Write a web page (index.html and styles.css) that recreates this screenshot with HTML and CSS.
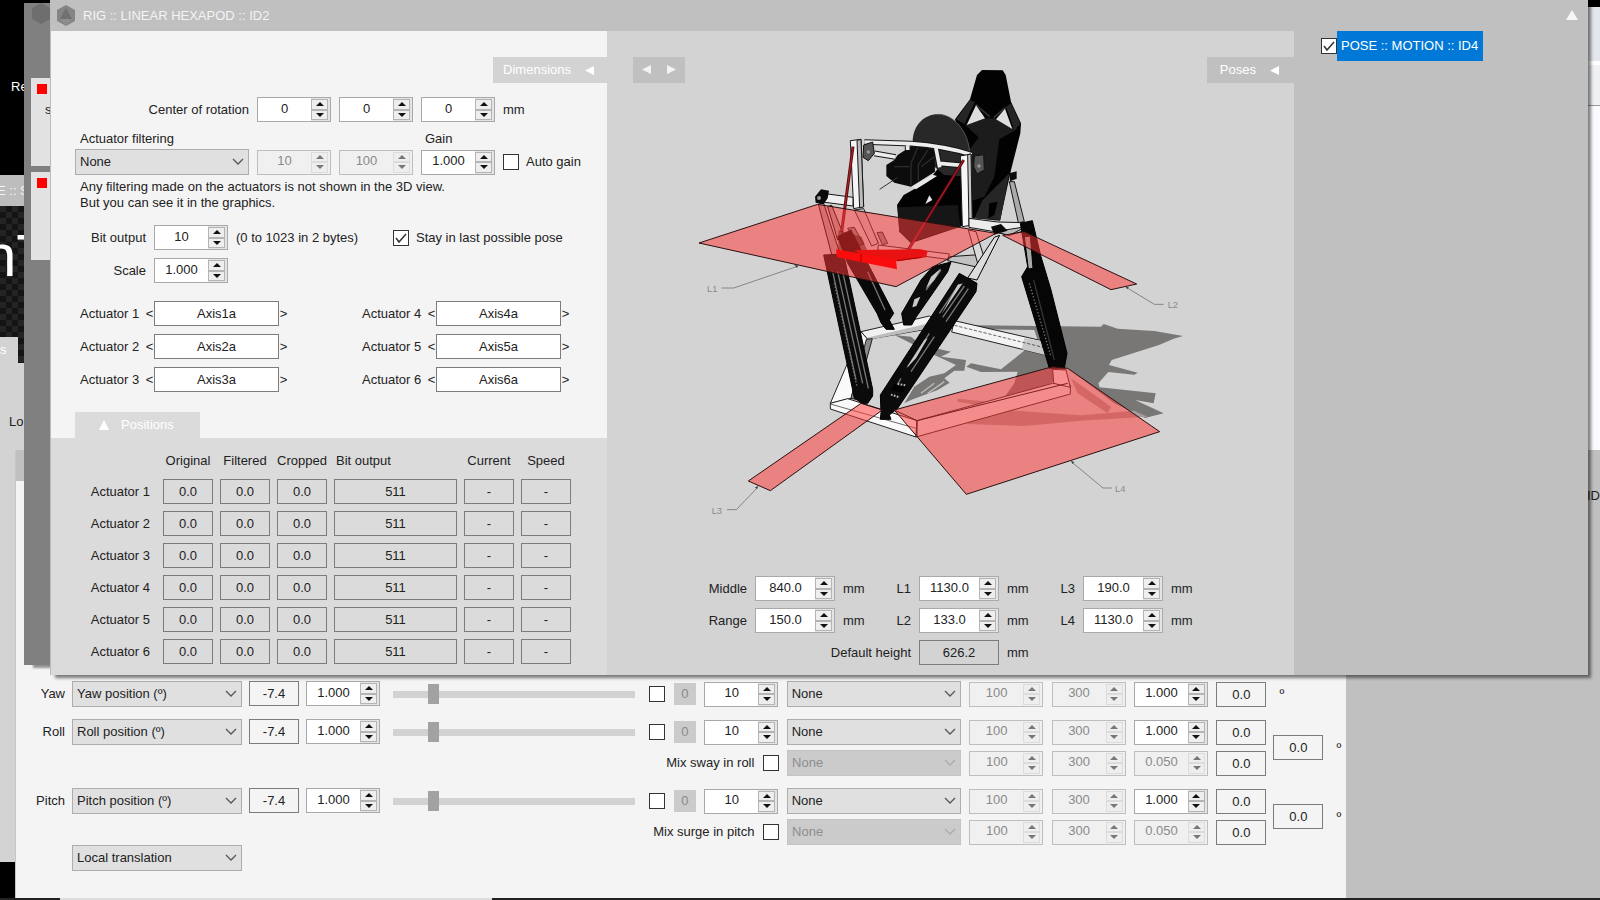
FILE: index.html
```
<!DOCTYPE html>
<html lang="en">
<head>
  <meta charset="UTF-8">
  <meta name="viewport" content="width=device-width, initial-scale=1.0">
  <title>RIG :: LINEAR HEXAPOD :: ID2</title>
  <link rel="stylesheet" href="styles.css">
</head>
<body>

  <span class="desktop-label">Re</span>

  <!-- windows behind -->
  <div class="window browser-window">
    <div class="browser-tabs"></div>
    <div class="browser-bar"></div>
  </div>

  <div class="window source-window">
    <div class="source-title">E :: S</div>
    <div class="carbon">
      <span class="logo-text">nT</span>
      <div class="source-tab">s</div>
    </div>
    <div class="source-body">Lo</div>
  </div>

  <div class="window pose-window">
    <div class="pose-main">
      <div class="pose-title"></div>
      <div class="pose-body">

        <div class="axis">
          <label class="axis-name" for="yaw">Yaw</label>
          <select id="yaw" class="sel-source"><option>Yaw position (º)</option></select>
          <output class="box">-7.4</output>
          <span class="spin"><input type="number" step="0.001" value="1.000" aria-label="Yaw gain"></span>
          <input type="range" value="15" aria-label="Yaw offset">
          <div class="filters">
            <div class="filter-row">
              <input type="checkbox" aria-label="Invert yaw">
              <button class="zero">0</button>
              <span class="spin"><input type="number" value="10" aria-label="Yaw range"></span>
              <select aria-label="Yaw filter"><option>None</option></select>
              <span class="spin"><input type="number" value="100" disabled aria-label="Yaw filter A"></span>
              <span class="spin"><input type="number" value="300" disabled aria-label="Yaw filter B"></span>
              <span class="spin"><input type="number" step="0.001" value="1.000" aria-label="Yaw filter gain"></span>
              <output class="box">0.0</output>
            </div>
          </div>
          <span class="unit">º</span>
        </div>

        <div class="axis">
          <label class="axis-name" for="roll">Roll</label>
          <select id="roll" class="sel-source"><option>Roll position (º)</option></select>
          <output class="box">-7.4</output>
          <span class="spin"><input type="number" step="0.001" value="1.000" aria-label="Roll gain"></span>
          <input type="range" value="15" aria-label="Roll offset">
          <div class="filters">
            <div class="filter-row">
              <input type="checkbox" aria-label="Invert roll">
              <button class="zero">0</button>
              <span class="spin"><input type="number" value="10" aria-label="Roll range"></span>
              <select aria-label="Roll filter"><option>None</option></select>
              <span class="spin"><input type="number" value="100" disabled aria-label="Roll filter A"></span>
              <span class="spin"><input type="number" value="300" disabled aria-label="Roll filter B"></span>
              <span class="spin"><input type="number" step="0.001" value="1.000" aria-label="Roll filter gain"></span>
              <output class="box">0.0</output>
            </div>
            <div class="filter-row">
              <label class="mix" for="mixRoll">Mix sway in roll</label>
              <input type="checkbox" id="mixRoll">
              <select disabled aria-label="Sway filter"><option>None</option></select>
              <span class="spin"><input type="number" value="100" disabled aria-label="Sway filter A"></span>
              <span class="spin"><input type="number" value="300" disabled aria-label="Sway filter B"></span>
              <span class="spin"><input type="number" step="0.001" value="0.050" disabled aria-label="Sway gain"></span>
              <output class="box">0.0</output>
            </div>
          </div>
          <output class="box">0.0</output>
          <span class="unit">º</span>
        </div>

        <div class="axis">
          <label class="axis-name" for="pitch">Pitch</label>
          <select id="pitch" class="sel-source"><option>Pitch position (º)</option></select>
          <output class="box">-7.4</output>
          <span class="spin"><input type="number" step="0.001" value="1.000" aria-label="Pitch gain"></span>
          <input type="range" value="15" aria-label="Pitch offset">
          <div class="filters">
            <div class="filter-row">
              <input type="checkbox" aria-label="Invert pitch">
              <button class="zero">0</button>
              <span class="spin"><input type="number" value="10" aria-label="Pitch range"></span>
              <select aria-label="Pitch filter"><option>None</option></select>
              <span class="spin"><input type="number" value="100" disabled aria-label="Pitch filter A"></span>
              <span class="spin"><input type="number" value="300" disabled aria-label="Pitch filter B"></span>
              <span class="spin"><input type="number" step="0.001" value="1.000" aria-label="Pitch filter gain"></span>
              <output class="box">0.0</output>
            </div>
            <div class="filter-row">
              <label class="mix" for="mixPitch">Mix surge in pitch</label>
              <input type="checkbox" id="mixPitch">
              <select disabled aria-label="Surge filter"><option>None</option></select>
              <span class="spin"><input type="number" value="100" disabled aria-label="Surge filter A"></span>
              <span class="spin"><input type="number" value="300" disabled aria-label="Surge filter B"></span>
              <span class="spin"><input type="number" step="0.001" value="0.050" disabled aria-label="Surge gain"></span>
              <output class="box">0.0</output>
            </div>
          </div>
          <output class="box">0.0</output>
          <span class="unit">º</span>
        </div>

        <div class="axis translation">
          <select class="sel-source" aria-label="Translation"><option>Local translation</option></select>
        </div>
      </div>
    </div>
    <div class="pose-side">ID</div>
  </div>

  <div class="window list-window">
    <svg class="hex" viewBox="0 0 20 21"><path d="M10 0l9 5v11l-9 5-9-5V5z" fill="#6e6e6e"/></svg>
    <div class="list-card"><i class="red-dot"></i><span>s</span></div>
    <div class="list-card"><i class="red-dot"></i></div>
  </div>

  <!-- rig window -->
  <main class="window rig-window">
    <header class="title-bar">
      <svg class="hex" viewBox="0 0 20 21">
        <path d="M10 0l9 5v11l-9 5-9-5V5z" fill="#858585"/>
        <path d="M10 3l6 11H4z" fill="#707070"/>
        <path d="M4 14h12l-6 7z" fill="#8d8d8d"/>
      </svg>
      <h1>RIG :: LINEAR HEXAPOD :: ID2</h1>
      <button class="plain" aria-label="Collapse"><svg width="12" height="10" viewBox="0 0 12 10"><path d="M6 0l6 10H0z" fill="#f6f6f6"/></svg></button>
    </header>

    <section class="settings">
      <div class="dimensions">
        <button class="tab tab-dimensions">Dimensions <svg width="9" height="9" viewBox="0 0 9 9"><path d="M0 4.500L9 0v9z" fill="#fff"/></svg></button>

        <div class="row rotation">
          <label class="wide-label" for="rotX">Center of rotation</label>
          <span class="spin"><input type="number" id="rotX" value="0"></span>
          <span class="spin"><input type="number" value="0" aria-label="Rotation Y"></span>
          <span class="spin"><input type="number" value="0" aria-label="Rotation Z"></span>
          <span>mm</span>
        </div>

        <div class="row captions">
          <label class="caption-filter" for="actFilter">Actuator filtering</label>
          <label for="gain">Gain</label>
        </div>
        <div class="row filtering">
          <select id="actFilter"><option>None</option></select>
          <span class="spin"><input type="number" value="10" disabled aria-label="Filter A"></span>
          <span class="spin"><input type="number" value="100" disabled aria-label="Filter B"></span>
          <span class="spin"><input type="number" id="gain" step="0.001" value="1.000"></span>
          <label class="check"><input type="checkbox"> Auto gain</label>
        </div>
        <p class="hint">Any filtering made on the actuators is not shown in the 3D view.<br>But you can see it in the graphics.</p>

        <div class="row bit-output">
          <label class="short-label" for="bits">Bit output</label>
          <span class="spin"><input type="number" id="bits" value="10"></span>
          <span class="bytes">(0 to 1023 in 2 bytes)</span>
          <label class="check"><input type="checkbox" checked> Stay in last possible pose</label>
        </div>
        <div class="row scale">
          <label class="short-label" for="scale">Scale</label>
          <span class="spin"><input type="number" id="scale" step="0.001" value="1.000"></span>
        </div>

        <div class="actuators">
          <div class="actuator"><label for="a1">Actuator 1</label><button class="plain">&lt;</button><input type="text" id="a1" value="Axis1a"><button class="plain">&gt;</button></div>
          <div class="actuator"><label for="a4">Actuator 4</label><button class="plain">&lt;</button><input type="text" id="a4" value="Axis4a"><button class="plain">&gt;</button></div>
          <div class="actuator"><label for="a2">Actuator 2</label><button class="plain">&lt;</button><input type="text" id="a2" value="Axis2a"><button class="plain">&gt;</button></div>
          <div class="actuator"><label for="a5">Actuator 5</label><button class="plain">&lt;</button><input type="text" id="a5" value="Axis5a"><button class="plain">&gt;</button></div>
          <div class="actuator"><label for="a3">Actuator 3</label><button class="plain">&lt;</button><input type="text" id="a3" value="Axis3a"><button class="plain">&gt;</button></div>
          <div class="actuator"><label for="a6">Actuator 6</label><button class="plain">&lt;</button><input type="text" id="a6" value="Axis6a"><button class="plain">&gt;</button></div>
        </div>

        <button class="tab tab-positions"><svg width="10" height="10" viewBox="0 0 10 10"><path d="M5 0l5 10H0z" fill="#fff"/></svg> Positions</button>
      </div>

      <div class="positions">
        <table>
          <thead>
            <tr><th></th><th>Original</th><th>Filtered</th><th>Cropped</th><th>Bit output</th><th>Current</th><th>Speed</th></tr>
          </thead>
          <tbody>
            <tr><th>Actuator 1</th><td>0.0</td><td>0.0</td><td>0.0</td><td class="bits">511</td><td>-</td><td>-</td></tr>
            <tr><th>Actuator 2</th><td>0.0</td><td>0.0</td><td>0.0</td><td class="bits">511</td><td>-</td><td>-</td></tr>
            <tr><th>Actuator 3</th><td>0.0</td><td>0.0</td><td>0.0</td><td class="bits">511</td><td>-</td><td>-</td></tr>
            <tr><th>Actuator 4</th><td>0.0</td><td>0.0</td><td>0.0</td><td class="bits">511</td><td>-</td><td>-</td></tr>
            <tr><th>Actuator 5</th><td>0.0</td><td>0.0</td><td>0.0</td><td class="bits">511</td><td>-</td><td>-</td></tr>
            <tr><th>Actuator 6</th><td>0.0</td><td>0.0</td><td>0.0</td><td class="bits">511</td><td>-</td><td>-</td></tr>
          </tbody>
        </table>
      </div>
    </section>

    <section class="view">
      <div class="view-top">
        <div class="nav">
          <button class="plain" aria-label="Previous view"><svg width="9" height="9" viewBox="0 0 9 9"><path d="M0 4.500L9 0v9z" fill="#f4f4f4"/></svg></button>
          <button class="plain" aria-label="Next view"><svg width="9" height="9" viewBox="0 0 9 9"><path d="M9 4.500L0 0v9z" fill="#f4f4f4"/></svg></button>
        </div>

        <svg class="rig" viewBox="30 21 1530 1419">
          <!-- shadow on the floor -->
          <g fill="#797775">
            <path d="M820 825L1260 830L1268 822L1310 836L1420 843L1506 858L1478 866L1434 885L1292 930L1284 945L1370 968L1360 974L1282 966L1252 1000L1256 1012L1424 1030L1418 1060L1362 1050L1448 1090L1392 1104L1300 1060L1160 955L1110 1000L1040 1024L1000 1050L960 1056L1000 1000L1010 965L900 966L856 950L870 940L960 958L1070 870L1060 840L820 836z"/>
            <path d="M640 855L690 860L720 885L810 905L780 920L855 930L850 962L820 962L790 985L806 998L770 1020L690 1050L670 1060L700 1010L745 980L790 970L825 945L760 915z"/>
          </g>
          <g fill="#a59b9a">
            <path d="M830 1046L910 1054L1000 1082L1200 1096L1360 1082L1400 1100L1200 1112L1030 1128L860 1122L850 1108L940 1098L900 1066L830 1056z"/>
            <path d="M1170 985L1290 1070L1280 1090L1190 1030z"/>
          </g>
          <path d="M760 1000L720 1030M790 995L740 1030" stroke="#bcbcbc" stroke-width="4"/>

          <!-- base frame -->
          <g stroke="#222" stroke-width="3" stroke-linejoin="round">
            <path d="M540 845L745 798L775 812L770 832L560 868z" fill="#f2f2f2"/>
            <path d="M545 866L770 814L770 830L560 870z" fill="#bdbdbd" stroke="none"/>
            <path d="M820 812L1095 875L1105 918L812 846z" fill="#f3f3f3"/>
            <path d="M1030 864L1095 875L1105 918L1022 898z" fill="#c9c9c9" stroke="none"/>
            <path d="M820 826L1098 895" fill="none" stroke-width="2" stroke-dasharray="10 5"/>
            <path d="M540 845L560 868L510 1045L448 1060z" fill="#fafafa"/>
            <path d="M556 868L574 866L524 1048L510 1045z" fill="#8a8a8a"/>
            <path d="M448 1060L500 1046L708 1112L705 1161L448 1077z" fill="#fafafa"/>
            <path d="M448 1062L705 1135" fill="none" stroke-width="2"/>
            <path d="M708 1112L1115 1000L1168 1005L1168 1032L705 1161z" fill="#e9e9e9"/>
            <path d="M1115 958L1155 960L1168 1012L1118 1000z" fill="#eee"/>
          </g>

          <!-- seat -->
          <path d="M903 60L965 61L974 75L990 155L1020 220L1018 250L990 360L957 512L880 505L838 530L690 580L655 545L648 465L668 435L740 395L775 350L850 300L822 208L867 148L888 75z" fill="#020202"/>
          <path d="M852 225L905 205L940 205L1010 237L955 268L940 380L910 440L865 455L865 300L893 262z" fill="#1c1c1c"/>
          <path d="M867 150L882 155L850 222L826 208zM990 160L1018 222L1000 240L975 170z" fill="#252525"/>
          <path d="M884 164L926 200M974 172L938 203" stroke="#333" stroke-width="5" fill="none"/>
          <path d="M885 166L857 225L912 205zM972 176L945 208L994 237z" fill="#dedede"/>
          <path d="M650 472L830 465L838 530L690 575L655 545z" fill="#161616"/>
          <path d="M745 436L733 462L754 450z" fill="#e6e6e6"/>
          <path d="M905 450L985 370L958 510L880 505z" fill="#262626"/>
          <path d="M925 460l25-5-10 40-18 10z" fill="#000"/>

          <!-- wheel and motor -->
          <path d="M695 270C698 225 730 193 770 193C818 193 860 242 866 304L862 380L790 375L700 300z" fill="#282828"/>
          <path d="M770 193C818 193 860 242 866 304" fill="none" stroke="#555" stroke-width="3"/>
          <path d="M700 282L760 300L762 365L690 410L640 398L616 378L616 345L640 330L650 315z" fill="#0c0c0c"/>
          <path d="M710 293L690 340L690 405M740 300L712 345V392M640 350H685M760 320L720 350" stroke="#2c2c2c" stroke-width="4" fill="none"/>
          <path d="M596 418L650 382" stroke="#333" stroke-width="3"/>
          <path d="M692 410L755 374L768 378L705 418z" fill="#e8e8e8"/>

          <!-- dashboard rail -->
          <g fill="none">
            <path id="rail" d="M550 276L690 281Q790 288 872 314M580 310L644 321M764 290L776 352M776 340L842 346M680 282V300" stroke="#161616" stroke-width="17"/>
            <path d="M550 276L690 281Q790 288 872 314M580 310L644 321M764 290L776 352M776 340L842 346M680 282V300" stroke="#ededed" stroke-width="11"/>
          </g>

          <!-- upper frame -->
          <g stroke="#161616" stroke-width="3" stroke-linejoin="round">
            <path d="M508 272L540 268L548 470L518 476z" fill="#f4f4f4"/>
            <path d="M528 271L540 268L548 470L536 474z" fill="#bcbcbc"/>
            <path d="M838 318L870 312L874 525L844 530z" fill="#f7f7f7"/>
            <path d="M860 314L870 312L874 525L864 528z" fill="#c6c6c6"/>
            <path d="M425 430L516 442V468L425 456z" fill="#efefef"/>
            <path d="M864 505L950 516L1030 518L1036 540L985 556L940 545L864 532z" fill="#ececec"/>
            <path d="M940 545L1036 530L985 556z" fill="#bbb"/>
            <path d="M805 620L880 615L915 635L905 655L800 632z" fill="#c2c2c2"/>
            <path d="M862 540L885 545L915 640L890 640z" fill="#dadada"/>
            <path d="M985 395L1000 395L1030 515L1012 518z" fill="#aaa"/>
          </g>
          <path d="M548 285L575 276L580 310L562 332L546 322zM880 318L908 314L910 360L888 372L878 350z" fill="#555" stroke="#111" stroke-width="3"/>
          <circle cx="562" cy="306" r="5" fill="#999"/><circle cx="894" cy="348" r="5" fill="#999"/>
          <path d="M402 440L420 418L444 422L440 445L428 462L404 458zM985 370l22-6v22l-20 8zM930 530l30-8 20 20-40 12z" fill="#0a0a0a"/>
          <circle cx="414" cy="444" r="6" fill="#999"/>

          <!-- pedals -->
          <g fill="#8c8c8c" stroke="#222" stroke-width="3">
            <path d="M500 535L520 532L548 582L530 588zM552 542L574 542L592 578L572 584zM588 548L604 546L620 580L604 584z"/>
            <path d="M520 480L548 476L592 580L572 588z" fill="#c9c9c9"/>
            <path d="M592 585L805 612L800 628L590 600z" fill="#ddd"/>
          </g>

          <!-- actuators -->
          <g stroke="#000" stroke-width="3" stroke-linejoin="round">
            <path d="M412 462L428 460L480 620L455 625zM440 470L452 466L490 560L470 570z" fill="#aaa"/>
            <path d="M428 615L488 612L575 1018L575 1038L560 1060H545L520 1045L515 1020z" fill="#0b0b0b"/>
            <path d="M470 560L510 540L560 640L638 790L625 810L640 838H615L600 818L588 790L500 640z" fill="#080808"/>
            <path d="M755 650L810 636L800 665L705 802L692 825H668L662 790L720 690z" fill="#0b0b0b"/>
            <path d="M940 562L956 556L888 690L860 684z" fill="#ddd"/>
            <path d="M835 670L888 700L885 725L650 1075L625 1095L630 1108H598L600 1088L598 1035z" fill="#0b0b0b"/>
            <path d="M1018 520L1054 512L1080 620L1110 720L1158 910L1150 955H1105L1022 680L1040 650z" fill="#060606"/>
            <path d="M1030 560L1048 558L1056 655L1042 657z" fill="#aaa"/>
          </g>
          <g fill="none" stroke="#777" stroke-width="4">
            <path d="M455 665L525 990M470 665L545 1000M486 670L562 1015"/>
            <path d="M460 700L528 1010M1045 700L1110 920" stroke-dasharray="4 6"/>
            <path d="M560 665L612 780M780 660L735 720M835 702L775 790M850 708L785 802M862 716L795 815M745 850L680 950M760 860L690 965M660 985L640 1020"/>
            <path d="M1058 690L1120 930" stroke="#333"/>
          </g>
          <path d="M780 655L760 690L735 715L750 680zM845 700L780 795L772 810L830 705zM740 865L705 925L676 955L730 870zM700 748l18-8-12 28-12 4z" fill="#c9c9c9"/>
          <path d="M640 1002l36 4-10 22-36-8z" fill="#000"/>
          <path d="M650 1002l24 4M630 1034l26 8" stroke="#bbb" stroke-width="6" stroke-dasharray="5 4"/>

          <!-- red belts -->
          <path d="M516 290L482 545M848 330L672 615" stroke="#5c0a0f" stroke-width="9" fill="none"/>
          <path d="M516 290L482 545M848 330L672 615" stroke="#b3232b" stroke-width="3" fill="none"/>

          <!-- dimension planes -->
          <g fill="#ff3838" fill-opacity=".52" stroke="#2a1010" stroke-width="3" stroke-linejoin="round">
            <path d="M54 579L410 463L945 550L645 710z"/>
            <path d="M965 556L1030 545L1367 702L1290 719z"/>
            <path d="M202 1293L540 1060L604 1080L268 1322z"/>
            <path d="M640 1080L1115 950L1160 955L1436 1145L856 1333z"/>
          </g>
          <path d="M472 540l70 20 20 50-90-10z" fill="#8d1515" opacity=".5"/>
          <path d="M520 600L720 598L740 604L735 622L650 634L545 618z" fill="#e81212"/>
          <path d="M465 598L645 630L648 658L468 622z" fill="#fb0d0d"/>
          <path d="M540 612v24M648 632l74-10" stroke="#a00" stroke-width="3"/>
          <path d="M640 1080L708 1112L1160 1000M708 1112V1158" stroke="#7a2020" stroke-width="3" fill="none"/>

          <!-- callouts -->
          <g fill="none" stroke="#858585" stroke-width="3">
            <path d="M122 714H158L352 648M1336 712L1420 763H1448M138 1379H166L230 1312M1172 1236L1266 1314H1292"/>
          </g>
          <path d="M352 646l-12 0 8 8zM1334 710l10 2-6 6zM232 1308l-10 4 6 6zM1170 1232l10 4-6 6z" fill="#444"/>
          <g class="callout">
            <text x="78" y="726">L1</text>
            <text x="1460" y="774">L2</text>
            <text x="92" y="1391">L3</text>
            <text x="1302" y="1325">L4</text>
          </g>
        </svg>

        <button class="tab tab-poses">Poses <svg width="9" height="9" viewBox="0 0 9 9"><path d="M0 4.500L9 0v9z" fill="#fff"/></svg></button>
      </div>

      <div class="sizes">
        <label for="middle">Middle</label><span class="spin"><input type="number" id="middle" step="0.1" value="840.0"></span><span>mm</span>
        <label for="l1">L1</label><span class="spin"><input type="number" id="l1" step="0.1" value="1130.0"></span><span>mm</span>
        <label for="l3">L3</label><span class="spin"><input type="number" id="l3" step="0.1" value="190.0"></span><span>mm</span>
        <label for="range">Range</label><span class="spin"><input type="number" id="range" step="0.1" value="150.0"></span><span>mm</span>
        <label for="l2">L2</label><span class="spin"><input type="number" id="l2" step="0.1" value="133.0"></span><span>mm</span>
        <label for="l4">L4</label><span class="spin"><input type="number" id="l4" step="0.1" value="1130.0"></span><span>mm</span>
        <label class="height-label" for="height">Default height</label><output class="box" id="height">626.2</output><span>mm</span>
      </div>
    </section>

    <aside class="poses">
      <label class="pose-item"><input type="checkbox" checked><span>POSE :: MOTION :: ID4</span></label>
    </aside>
  </main>

  <div class="taskbar"><div class="task"></div></div>

  <script>
    // up / down buttons for every number box
    document.querySelectorAll(".spin").forEach(function (spin) {
      const input = spin.querySelector("input");
      const buttons = document.createElement("span");
      buttons.className = "spin-buttons";
      ["up", "down"].forEach(function (dir) {
        const btn = document.createElement("button");
        btn.className = dir;
        btn.disabled = input.disabled;
        btn.setAttribute("aria-label", dir);
        btn.onclick = function () {
          dir === "up" ? input.stepUp() : input.stepDown();
        };
        buttons.appendChild(btn);
      });
      spin.appendChild(buttons);
    });
  </script>

</body>
</html>
```
FILE: styles.css
```
* {
  box-sizing: border-box;
}

body {
  margin: 0;
  height: 100vh;
  overflow: hidden;
  background: #000;
  color: #222;
  font-family: "Liberation Sans", Arial, sans-serif;
  font-size: 13px;
  line-height: 16px;
}

button, input, select {
  font: inherit;
  color: inherit;
  margin: 0;
}

.plain {
  border: none;
  background: none;
  padding: 0;
}

/* windows on the desktop */
.window {
  position: absolute;
}

.desktop-label {
  position: absolute;
  left: 11px;
  top: 79px;
  color: #fff;
}

.browser-window {
  right: 0;
  top: 7px;
  width: 100px;
  height: 500px;
  background: #fbfbff;
}

.browser-tabs {
  height: 58px;
  background: #e3e6eb;
  border-bottom: 4px solid #fff;
}

.browser-bar {
  height: 41px;
  background: #f0f1f3;
  border-bottom: 1px solid #999;
}

.source-window {
  left: 0;
  top: 175px;
  width: 60px;
  height: 687px;
  background: #d3d3d3;
  overflow: hidden;
  white-space: nowrap;
}

.source-title {
  height: 31px;
  line-height: 31px;
  background: #bdbdbd;
  color: #f4f4f4;
  text-indent: -3px;
}

.carbon {
  display: flex;
  flex-direction: column;
  justify-content: space-between;
  height: 157px;
  background: repeating-conic-gradient(#141414 0 25%, #242424 0 50%) 0 0 / 12px 12px;
}

.logo-text {
  padding-top: 22px;
  color: #fff;
  font-size: 60px;
  line-height: 56px;
  text-indent: -17px;
}

.source-tab {
  width: 18px;
  height: 26px;
  line-height: 26px;
  color: #fff;
  background: #d3d3d3;
}

.source-body {
  padding: 51px 0 0 9px;
}

.list-window {
  left: 24px;
  top: 3px;
  width: 60px;
  height: 662px;
  padding: 0 0 0 7px;
  background: #808080;
  box-shadow: 8px 4px 2px -1px rgba(0, 0, 0, 0.4);
}

.list-window .hex {
  display: block;
  margin-bottom: 54px;
}

.list-card {
  height: 88px;
  margin-bottom: 6px;
  padding: 6px;
  background: #e2e2e2;
}

.list-card span {
  display: block;
  padding: 8px 0 0 8px;
}

.red-dot {
  display: block;
  width: 10px;
  height: 10px;
  background: #f00;
}

.hex {
  width: 20px;
  height: 21px;
}

/* number box */
.spin {
  display: flex;
  flex: none;
  width: 74px;
  height: 25px;
  border: 1px solid #a9a9a9;
  background: #fff;
}

.spin input {
  appearance: textfield;
  flex: 1;
  min-width: 0;
  padding: 0 0 2px;
  border: none;
  background: none;
  text-align: center;
}

.spin input::-webkit-inner-spin-button {
  appearance: none;
  display: none;
}

.spin-buttons {
  display: flex;
  flex-direction: column;
  width: 19px;
  padding: 1px 2px 1px 0;
  background: #e4e4e4;
}

.spin-buttons button {
  flex: 1;
  padding: 0;
  border: 1px solid #b4b4b4;
  background: #eee;
}

.spin-buttons button::before {
  content: "";
  display: block;
  margin: 0 auto;
  width: 0;
  border: 4px solid transparent;
  border-top-width: 0;
  border-bottom-color: #111;
}

.spin-buttons .down::before {
  border-top: 4px solid #111;
  border-bottom-width: 0;
}

.spin:has(input:disabled) {
  background: #f0f0f0;
  border-color: #bebebe;
  color: #8a8a8a;
}

.spin:has(input:disabled) .spin-buttons {
  background: #f0f0f0;
}

.spin-buttons button:disabled {
  border-color: #dcdcdc;
}

.spin-buttons button:disabled::before {
  border-bottom-color: #777;
}

.spin-buttons .down:disabled::before {
  border-top-color: #777;
}

select {
  appearance: none;
  flex: none;
  width: 174px;
  height: 26px;
  padding: 0 24px 0 4px;
  border: 1px solid #adadad;
  border-radius: 0;
  background: #e0e0e0 url("data:image/svg+xml,%3Csvg xmlns='http://www.w3.org/2000/svg' width='12' height='8'%3E%3Cpath d='M1 1l5 5 5-5' fill='none' stroke='%23555' stroke-width='1.300'/%3E%3C/svg%3E") no-repeat right 4px center;
}

select:disabled {
  border-color: #c4c4c4;
  background-color: #cbcbcb;
  background-image: url("data:image/svg+xml,%3Csvg xmlns='http://www.w3.org/2000/svg' width='12' height='8'%3E%3Cpath d='M1 1l5 5 5-5' fill='none' stroke='%23aaa' stroke-width='1.300'/%3E%3C/svg%3E");
  color: #8d8d8d;
  opacity: 1;
}

.box {
  flex: none;
  width: 50px;
  height: 25px;
  border: 1px solid #7c7c7c;
  line-height: 24px;
  text-align: center;
}

input[type="checkbox"] {
  appearance: none;
  flex: none;
  width: 16px;
  height: 16px;
  border: 1px solid #333;
  background: #fff;
}

input[type="checkbox"]:checked {
  background: #fff url("data:image/svg+xml,%3Csvg xmlns='http://www.w3.org/2000/svg' width='14' height='14'%3E%3Cpath d='M2 7l3 4 7-8' fill='none' stroke='%23333' stroke-width='1.500'/%3E%3C/svg%3E") no-repeat center;
}

input[type="range"] {
  appearance: none;
  flex: 1;
  min-width: 0;
  height: 26px;
  margin: 0 7px 0 6px;
  background: none;
}

input[type="range"]::-webkit-slider-runnable-track {
  height: 7px;
  background: #d2d2d2;
}

input[type="range"]::-webkit-slider-thumb {
  appearance: none;
  width: 11px;
  height: 20px;
  margin-top: -7px;
  background: #a2a2a2;
}

.tab {
  display: flex;
  align-items: center;
  border: none;
  height: 26px;
  color: #fff;
}

/* pose window */
.pose-window {
  left: 15px;
  right: 0;
  top: 450px;
  bottom: 2px;
  display: flex;
  background: #c0c0c0;
}

.pose-main {
  display: flex;
  flex-direction: column;
  width: 84%;
  border-left: 1px solid #c6c6c6;
  background: #f4f4f4;
}

.pose-title {
  height: 31px;
  background: #c0c0c0;
}

.pose-body {
  flex: 1;
  display: flex;
  flex-direction: column;
  justify-content: flex-end;
  padding-bottom: 27px;
}

.pose-side {
  flex: 1;
  padding-top: 38px;
  text-align: right;
}

.axis {
  display: flex;
  align-items: flex-start;
  gap: 7px;
  margin-bottom: 12px;
}

.axis-name {
  width: 49px;
  line-height: 26px;
  text-align: right;
}

.axis > .filters ~ .box, .axis > .unit {
  align-self: center;
}

.sel-source {
  width: 170px;
}

.filters {
  display: flex;
  flex-direction: column;
  gap: 5px;
}

.filter-row {
  display: flex;
  align-items: center;
  justify-content: space-between;
  width: 617px;
}

.filter-row select {
  width: 174px;
}

.axis > .unit {
  width: 16px;
  padding-left: 6px;
}

/* the yaw row has no combined value */
.axis:first-child {
  padding-right: 57px;
}

.axis:nth-child(3) {
  margin-bottom: 0;
}

.translation {
  margin: 0;
  padding-left: 56px;
}

.zero {
  width: 22px;
  height: 22px;
  padding: 0;
  border: none;
  background: #cbcbcb;
  color: #8a8a8a;
}

.mix {
  width: 105px;
  text-align: right;
}

/* rig window */
.rig-window {
  left: 50px;
  right: 12px;
  top: 0;
  display: grid;
  grid-template-columns: 556px 1fr 294px;
  grid-template-rows: 31px auto;
  border-left: 1px solid #bbb;
  background: #c0c0c0;
  box-shadow: 4px 4px 3px -1px rgba(0, 0, 0, 0.5);
}

.title-bar {
  grid-column: 1 / -1;
  display: flex;
  align-items: center;
  padding: 0 10px 0 5px;
}

.title-bar h1 {
  flex: 1;
  margin: 0 0 0 7px;
  color: #f4f4f4;
  font-size: 13px;
  font-weight: normal;
}

.settings {
  display: flex;
  flex-direction: column;
}

.dimensions {
  display: flex;
  flex-direction: column;
  padding: 26px 0 0 24px;
  background: #f4f4f4;
}

.tab-dimensions {
  align-self: flex-end;
  gap: 14px;
  padding: 0 13px 0 10px;
  background: #d3d3d3;
}

.row {
  display: flex;
  align-items: center;
  gap: 8px;
}

.rotation {
  margin-top: 14px;
}

.wide-label {
  width: 174px;
  text-align: right;
}

.captions {
  margin-top: 9px;
  padding-left: 5px;
}

.caption-filter {
  width: 337px;
}

.filtering {
  margin-top: 2px;
}

.check {
  display: flex;
  align-items: center;
  gap: 7px;
}

.hint {
  margin: 4px 0 0;
  padding-left: 5px;
}

.bit-output {
  margin-top: 14px;
}

.short-label {
  width: 71px;
  text-align: right;
}

.bytes {
  width: 149px;
}

.scale {
  margin-top: 8px;
}

.actuators {
  display: grid;
  grid-template-columns: 282px 1fr;
  row-gap: 8px;
  margin-top: 18px;
  padding-left: 5px;
}

.actuator {
  display: flex;
  align-items: center;
}

.actuator label {
  width: 65px;
}

.actuator .plain {
  width: 9px;
}

.actuator input {
  width: 125px;
  height: 25px;
  padding: 0;
  border: 1px solid #7c7c7c;
  background: #fff;
  text-align: center;
}

.tab-positions {
  align-self: flex-start;
  gap: 12px;
  width: 125px;
  margin-top: 20px;
  padding: 0 24px;
  background: #dbdbdb;
}

.positions {
  flex: 1;
  padding: 7px 0 4px 24px;
  background: #dbdbdb;
}

.positions table {
  border-spacing: 7px;
  margin: -3px 0 0 -7px;
}

.positions th {
  padding: 0;
  font-weight: normal;
  text-align: center;
  white-space: nowrap;
}

.positions thead th {
  height: 23px;
}

.positions th:first-child {
  width: 81px;
  padding-right: 6px;
  text-align: right;
}

.positions thead th:nth-child(5) {
  padding-left: 2px;
  text-align: left;
}

.positions td {
  width: 50px;
  height: 25px;
  padding: 0;
  border: 1px solid #7c7c7c;
  text-align: center;
}

.positions .bits {
  width: 123px;
}

.view {
  display: flex;
  flex-direction: column;
  justify-content: space-between;
  padding: 26px 0 10px 26px;
  background: #d3d3d3;
}

.view-top {
  display: flex;
  justify-content: space-between;
}

.nav {
  display: flex;
  justify-content: space-between;
  width: 52px;
  height: 26px;
  padding: 0 9px;
  background: #c0c0c0;
}

.rig {
  flex: none;
  width: 510px;
  height: 473px;
}

.callout {
  fill: #8a8a8a;
  font-size: 28px;
}

.tab-poses {
  gap: 14px;
  padding: 0 15px 0 13px;
  background: #c0c0c0;
}

.sizes {
  display: grid;
  grid-template-columns: 70px 80px 36px 24px 80px 36px 24px 80px 36px;
  column-gap: 8px;
  row-gap: 7px;
  align-items: center;
  align-self: flex-start;
  margin-left: 44px;
}

.sizes label {
  text-align: right;
}

.sizes .spin, .sizes .box {
  width: 80px;
}

.sizes .height-label {
  grid-column: 1 / 5;
}

.poses {
  padding-left: 27px;
}

.pose-item {
  display: inline-flex;
  align-items: center;
}

.pose-item span {
  padding: 0 5px 0 4px;
  background: #0078d7;
  color: #fff;
  line-height: 30px;
}

.taskbar {
  position: absolute;
  left: 0;
  right: 0;
  bottom: 0;
  height: 2px;
  background: #222;
}

.task {
  width: 27%;
  height: 2px;
  margin-left: 60px;
  background: #ddd;
}
```
